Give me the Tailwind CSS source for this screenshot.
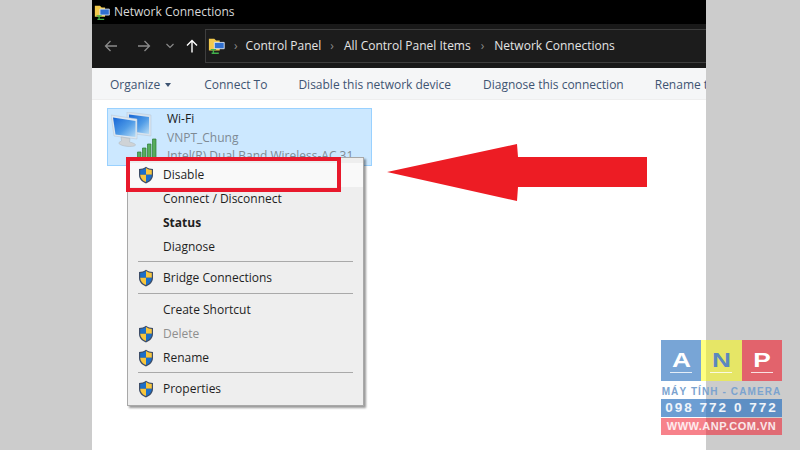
<!DOCTYPE html>
<html lang="en">
<head>
    <meta charset="UTF-8">
    <meta name="viewport" content="width=device-width, initial-scale=1.0">
    <title>Network Connections</title>
    <script src="https://cdn.jsdelivr.net/npm/@tailwindcss/browser@4"></script>
</head>
<body class="w-[800px] h-[450px] overflow-hidden bg-[#cccccc] font-['Open_Sans','Noto_Sans',sans-serif]">
    <svg class="absolute w-0 h-0">
        <defs>
            <linearGradient id="screen" x1="0" y1="0" x2="1" y2="1">
                <stop offset="0" stop-color="#1565d6"/>
                <stop offset="0.55" stop-color="#4f9be6"/>
                <stop offset="1" stop-color="#b6dcf6"/>
            </linearGradient>
        </defs>
        <symbol id="shield" viewBox="0 0 16 18">
            <path d="M8 .8C6 2.400 3.600 3 1 3v6c0 4 3 6.900 7 8.400 4-1.500 7-4.400 7-8.400V3C12.400 3 10 2.400 8 .8z" fill="#3d4c66"/>
            <path d="M8 2v6.800H2.200V4C4.200 3.900 6.300 3.300 8 2z" fill="#1c6fc9"/>
            <path d="M8 2c1.700 1.300 3.800 1.900 5.800 2v4.800H8z" fill="#f8c63d"/>
            <path d="M2.200 8.800H8v7.300C4.700 14.800 2.300 12.300 2.200 9z" fill="#f8c63d"/>
            <path d="M8 8.800h5.800V9c-.1 3.300-2.500 5.800-5.800 7.100z" fill="#1c6fc9"/>
        </symbol>
        <symbol id="net" viewBox="0 0 20 20">
            <path d="M1 2h6l2 2h4v11H1z" fill="#f2c94c"/>
            <path d="M7 6h11v7H7z" fill="#2f6fd0" stroke="#dfe7f2"/>
            <path d="M3 14h6M6 14v4M4 18h8" stroke="#41b04a" stroke-width="1.500" fill="none"/>
        </symbol>
    </svg>

    <div class="relative w-[614px] h-[450px] ml-[92px] bg-white">
        <!-- title bar -->
        <div class="h-6 bg-black flex items-center pl-0.5 gap-[3px] text-[12px] text-[#d8d8d8]">
            <svg class="w-[17px] h-[17px]"><use href="#net"/></svg>
            <span>Network Connections</span>
        </div>

        <!-- address bar -->
        <div class="h-11 bg-[#191919] flex items-center">
            <div class="w-[113px] flex items-center text-[#8a8a8a]">
                <svg class="w-3.5 h-3.5 ml-[12px]" viewBox="0 0 14 14" fill="none" stroke="currentColor" stroke-width="1.300"><path d="M13 7H1.500M6.500 2 1.500 7l5 5"/></svg>
                <svg class="w-3.5 h-3.5 ml-[19px]" viewBox="0 0 14 14" fill="none" stroke="currentColor" stroke-width="1.300"><path d="M1 7h11.500M7.500 2l5 5-5 5"/></svg>
                <svg class="w-2 h-2 ml-[15px]" viewBox="0 0 8 8" fill="none" stroke="currentColor" stroke-width="1.200"><path d="m.5 2 3.500 3.500L7.500 2"/></svg>
                <svg class="w-3.5 h-3.5 ml-[11px] text-white" viewBox="0 0 14 14" fill="none" stroke="currentColor" stroke-width="1.400"><path d="M7 13.500V1.500M2 6.500l5-5 5 5"/></svg>
            </div>
            <div class="h-[34px] flex-1 bg-[#1c1c1c] border-y border-l border-[#3e3e3e] flex items-center pl-0.5 text-[12px] text-[#e4e4e4]">
                <svg class="w-[18px] h-[18px] mr-2"><use href="#net"/></svg>
                <span class="text-[#8a8a8a] text-[12px] mr-[8px]">&#8250;</span>
                <span>Control Panel</span>
                <span class="text-[#8a8a8a] text-[12px] ml-[9px] mr-[10px]">&#8250;</span>
                <span>All Control Panel Items</span>
                <span class="text-[#8a8a8a] text-[12px] ml-[10px] mr-[10px]">&#8250;</span>
                <span>Network Connections</span>
            </div>
        </div>

        <!-- command bar -->
        <div class="h-8 bg-[#f5f6f7] border-b border-[#eeeeee] flex items-center pl-[18px] pt-[3px] text-[12px] text-[#3e5472] whitespace-nowrap overflow-hidden">
            <span>Organize</span>
            <span class="ml-[5px] mr-[33px] border-x-[3px] border-t-[4px] border-x-transparent border-t-[#3e5472]"></span>
            <span class="mr-[31px]">Connect To</span>
            <span class="mr-[32px]">Disable this network device</span>
            <span class="mr-[31px]">Diagnose this connection</span>
            <span>Rename this connection</span>
        </div>

        <!-- connection tile -->
        <div class="mt-2 ml-[15px] w-[265px] h-[58px] bg-[#cce8ff] border border-[#99d1ff] flex pl-[3px] pt-[3px]">
            <svg class="w-[52px] h-[52px] shrink-0" viewBox="0 0 52 52">
                <path d="M16 0l24 3v21l-24-3z" fill="#d7e3ee" stroke="#b4c5d4" stroke-width=".5"/>
                <path d="M18 2.500l20 2.500v17l-20-3z" fill="url(#screen)"/>
                <path d="M0 3l26 4v20L3 24z" fill="#dde7f0" stroke="#b4c5d4" stroke-width=".5"/>
                <path d="M2 5.500 24.500 9v16L4.500 22.500z" fill="url(#screen)"/>
                <path d="M10 25l9 1.500-.5 3.500c4 1 6 2 6 3s-4 2-9.500 1.200-8-2.700-7-3.700 2.500-1 2.500-2z" fill="#cfd3d6" stroke="#aab2b8" stroke-width=".5"/>
                <path d="M26.500 40h3.500v8h-3.500zM31.500 36h3.500v12h-3.500zM36.500 32h3.500v16h-3.500zM41.500 27h3.500v21h-3.500z" fill="#57ad5c" stroke="#2d7a37" stroke-width=".7"/>
            </svg>
            <div class="-mt-[2px] ml-[4px] text-[12px] leading-[18.500px] whitespace-nowrap">
                <div class="text-[#1b1b1b]">Wi-Fi</div>
                <div class="text-[#7e8a94]">VNPT_Chung</div>
                <div class="text-[#7e8a94]">Intel(R) Dual Band Wireless-AC 31...</div>
            </div>
        </div>

        <!-- context menu -->
        <div class="absolute left-[35px] top-[157px] w-[237px] bg-[#eeeeee] border border-[#a8a8a8] shadow-[2px_2px_2px_rgba(0,0,0,0.4)] pt-[5px] pb-[4px] text-[12px] text-[#1f1f1f]">
            <div class="h-6 flex items-center bg-[#f9f9f9]">
                <svg class="w-4 h-[18px] ml-[10px] mr-[9px]"><use href="#shield"/></svg><span>Disable</span>
            </div>
            <div class="h-6 flex items-center pl-[35px]">Connect / Disconnect</div>
            <div class="h-6 flex items-center pl-[35px] font-bold">Status</div>
            <div class="h-6 flex items-center pl-[35px]">Diagnose</div>
            <div class="h-[7px] flex items-center pl-[10px] pr-[10px] pb-[2px]"><div class="h-px w-full bg-[#a9a9a9]"></div></div>
            <div class="h-6 flex items-center">
                <svg class="w-4 h-[18px] ml-[10px] mr-[9px]"><use href="#shield"/></svg><span>Bridge Connections</span>
            </div>
            <div class="h-2 flex items-center pl-[10px] pr-[10px] pb-[2px]"><div class="h-px w-full bg-[#a9a9a9]"></div></div>
            <div class="h-6 flex items-center pl-[35px]">Create Shortcut</div>
            <div class="h-6 flex items-center text-[#8f8f8f]">
                <svg class="w-4 h-[18px] ml-[10px] mr-[9px]"><use href="#shield"/></svg><span>Delete</span>
            </div>
            <div class="h-6 flex items-center">
                <svg class="w-4 h-[18px] ml-[10px] mr-[9px]"><use href="#shield"/></svg><span>Rename</span>
            </div>
            <div class="h-[7px] flex items-center pl-[10px] pr-[10px] pb-[2px]"><div class="h-px w-full bg-[#a9a9a9]"></div></div>
            <div class="h-6 flex items-center">
                <svg class="w-4 h-[18px] ml-[10px] mr-[9px]"><use href="#shield"/></svg><span>Properties</span>
            </div>
        </div>

        <!-- red highlight and arrow -->
        <div class="absolute left-[34px] top-[157px] w-[215px] h-[35px] border-4 border-[#e8192c]"></div>
        <svg class="absolute left-[295px] top-[144px] w-[260px] h-[57px]" viewBox="0 0 260 57">
            <path d="M0 28 130 0l1 13h129v30H131l-1 14z" fill="#ed1c24"/>
        </svg>
    </div>

    <!-- ANP watermark -->
    <div class="absolute left-[661px] top-[340px] w-[121px] font-['Liberation_Sans',sans-serif] font-bold text-center whitespace-nowrap">
        <div class="flex h-[41px] text-white text-[21px] leading-[16px]">
            <div class="flex-1 flex flex-col items-center pt-[12px] bg-[#2f75c0]/65">
                <span class="scale-x-125">A</span>
                <span class="w-[22px] h-px mt-[4px] bg-white/80"></span>
            </div>
            <div class="flex-1 flex flex-col items-center pt-[12px] bg-[#ffff00]/50 text-[#5b88bf]">
                <span class="scale-x-125">N</span>
                <span class="w-[22px] h-px mt-[4px] bg-white/80"></span>
            </div>
            <div class="flex-1 flex flex-col items-center pt-[12px] bg-[#f01c2c]/60">
                <span class="scale-x-125">P</span>
                <span class="w-[22px] h-px mt-[4px] bg-white/80"></span>
            </div>
        </div>
        <div class="h-[18px] text-[10px] leading-[22px] text-[#7ba3cf] tracking-[1.100px]">MÁY TÍNH - CAMERA</div>
        <div class="h-[18px] bg-[#2f75c0]/70 text-white/90 text-[13.500px] leading-[18px] tracking-[2px]">098 772 0 772</div>
        <div class="h-[17px] mt-px bg-[#f01c2c]/55 text-white/85 text-[11px] leading-[17px] tracking-[0.500px]">WWW.ANP.COM.VN</div>
    </div>
</body>
</html>
